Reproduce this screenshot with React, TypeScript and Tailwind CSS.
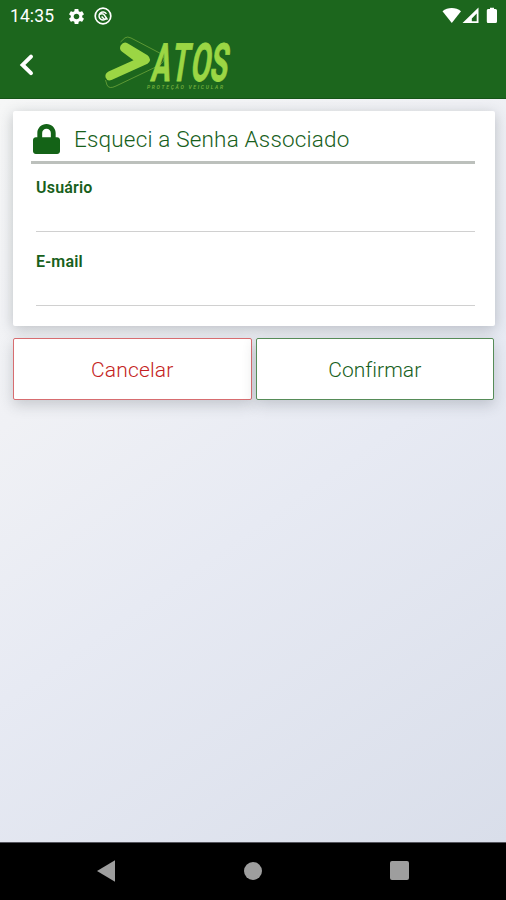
import React from 'react';
import { FaLock } from 'react-icons/fa';
import { MdSettings } from 'react-icons/md';

interface FieldProps {
  id: string;
  label: string;
  type: string;
}

const StatusBar: React.FC = () => {
  return (
    <div className="flex h-8 items-center justify-between pl-[10px] pr-[7px] text-white">
      <div className="flex items-center">
        <span className="w-[57px] text-[17.5px] leading-8 tracking-[0.1px]">14:35</span>
        <MdSettings size={19} />
        <svg className="ml-[8px]" width="18" height="18" viewBox="0 0 18 18" fill="none" stroke="currentColor">
          <circle cx="9" cy="9" r="7.8" strokeWidth="1.7" />
          <path d="M12.6 10.8A4 4 0 1 1 12.4 6.8" strokeWidth="1.5" />
          <path d="M5.4 7.4Q9 5.6 10.8 8.6L13.4 12.6" strokeWidth="1.6" />
          <path d="M7.6 9.4L10.6 12.6" strokeWidth="1.4" />
        </svg>
      </div>
      <svg width="57" height="18" viewBox="0 0 57 18" fill="currentColor">
        <path d="M0.5 4.2C5.5-0.2 14-0.2 19 4.2L9.8 16Z" />
        <path fillRule="evenodd" d="M36.5 0.5V16H20.5ZM34.7 6.5L29.8 11.5V14.3H34.7Z" />
        <path d="M46 2H48V0.8H52V2H53.5Q55 2 55 3.5V14.5Q55 16 53.5 16H46Q44.8 16 44.8 14.5V3.5Q44.8 2 46 2Z" />
      </svg>
    </div>
  );
};

const Logo: React.FC = () => {
  return (
    <svg className="overflow-visible" width="140" height="60" viewBox="100 35 140 60" fill="none">
      <path
        d="M120.5 42L125 37.8Q127.5 36.2 131 38L160 53.2Q168 58.5 160 65L116 86Q109 89.5 107 85L105.5 80"
        stroke="#6da43a"
        strokeWidth="0.8"
      />
      <path
        d="M127.5 43.2L147.5 55.2Q152.5 59.5 147.5 63.8L111.5 80Q107 81.5 105.6 77.6Q104.6 73.6 108.5 71.6L133.5 60.2L121.8 51.6Q118.8 48.8 120.8 45.2Q123.6 41.2 127.5 43.2Z"
        fill="#9bd644"
      />
      <text
        transform="translate(150 80.5) skewX(-9) scale(0.54 1)"
        x="0 37 73 109"
        fill="#9bd644"
        stroke="#9bd644"
        strokeWidth="0.8"
        fontSize="53"
        fontWeight="700"
      >
        ATOS
      </text>
      <text
        x="147"
        y="88.5"
        fill="#78b33e"
        fontSize="5"
        fontStyle="italic"
        fontWeight="500"
        textLength="76"
        lengthAdjust="spacing"
      >
        PROTEÇÃO VEICULAR
      </text>
    </svg>
  );
};

const Header: React.FC = () => {
  return (
    <header className="h-[99px] shrink-0 border-b border-[#155417] bg-[#1c661d]">
      <StatusBar />
      <div className="flex h-[66px] items-center">
        <button type="button" aria-label="Voltar" className="ml-[18px] w-[82px] text-white">
          <svg width="18" height="24" viewBox="0 0 18 24" fill="none" stroke="currentColor" strokeWidth="4" strokeLinecap="round">
            <path d="M13 3.6L4.6 11.9L13 20.2" />
          </svg>
        </button>
        <Logo />
      </div>
    </header>
  );
};

const Field: React.FC<FieldProps> = ({ id, label, type }) => {
  return (
    <div className="flex h-[74px] flex-col">
      <label htmlFor={id} className="text-[16px] leading-5 font-semibold tracking-[0.2px] text-[#17601b]">
        {label}
      </label>
      <input
        id={id}
        type={type}
        className="h-[34px] w-full border-b-[1.5px] border-[#d0d0d0] bg-transparent text-base outline-none"
      />
    </div>
  );
};

const NavigationBar: React.FC = () => {
  return (
    <nav className="flex h-[58px] shrink-0 items-center justify-between border-t border-[#55555d] bg-black pr-[97px] pb-[2px] pl-[97px] text-[#9e9e9e]">
      <svg width="18" height="22" viewBox="0 0 18 22" fill="currentColor">
        <path d="M0 11L18 0.3V21.7Z" />
      </svg>
      <div className="size-[18px] rounded-full bg-[#9e9e9e]" />
      <div className="size-[19px] rounded-[2px] bg-[#9e9e9e]" />
    </nav>
  );
};

const App: React.FC = () => {
  return (
    <div className="flex h-[900px] w-[506px] flex-col overflow-hidden bg-[#d9deea] font-[Roboto,sans-serif]">
      <Header />

      <main className="flex flex-1 flex-col bg-[linear-gradient(145deg,#f6f7f7_0%,#f0f1f5_30%,#e7eaf3_55%,#d9deea_100%)] px-3 pt-3">
        {/* Form card */}
        <section className="ml-px h-[215px] w-[482px] rounded-[2px] bg-white pr-[20px] pl-[18px] shadow-[0_3px_14px_rgba(50,60,70,0.28)]">
          <div className="flex h-[53px] items-center border-b-[3px] border-[#bcc0bc] pt-[5px]">
            <FaLock className="ml-[2px] h-[30px] w-[27px] text-[#146317]" preserveAspectRatio="none" />
            <h1 className="ml-[14px] pt-px text-[22.5px] leading-7 font-light tracking-[0.18px] whitespace-nowrap text-[#17601b]">
              Esqueci a Senha Associado
            </h1>
          </div>
          <form className="pt-[14px] pl-[5px]">
            <Field id="usuario" label="Usuário" type="text" />
            <Field id="email" label="E-mail" type="email" />
          </form>
        </section>

        {/* Actions */}
        <div className="mt-3 ml-px flex gap-1">
          <button
            type="button"
            className="h-[62px] w-[239px] rounded-[2px] border-[1.5px] border-[#d76d70] bg-white pt-[3px] text-[21px] font-light tracking-[0.15px] text-[#c41e22] shadow-[0_5px_14px_rgba(50,60,70,0.22)]"
          >
            Cancelar
          </button>
          <button
            type="button"
            className="h-[62px] w-[239px] rounded-[2px] border-[1.5px] border-[#568c58] bg-white pt-[3px] text-[21px] font-light tracking-[0.05px] text-[#17601b] shadow-[0_5px_14px_rgba(50,60,70,0.22)]"
          >
            Confirmar
          </button>
        </div>
      </main>

      <NavigationBar />
    </div>
  );
};

export default App;
